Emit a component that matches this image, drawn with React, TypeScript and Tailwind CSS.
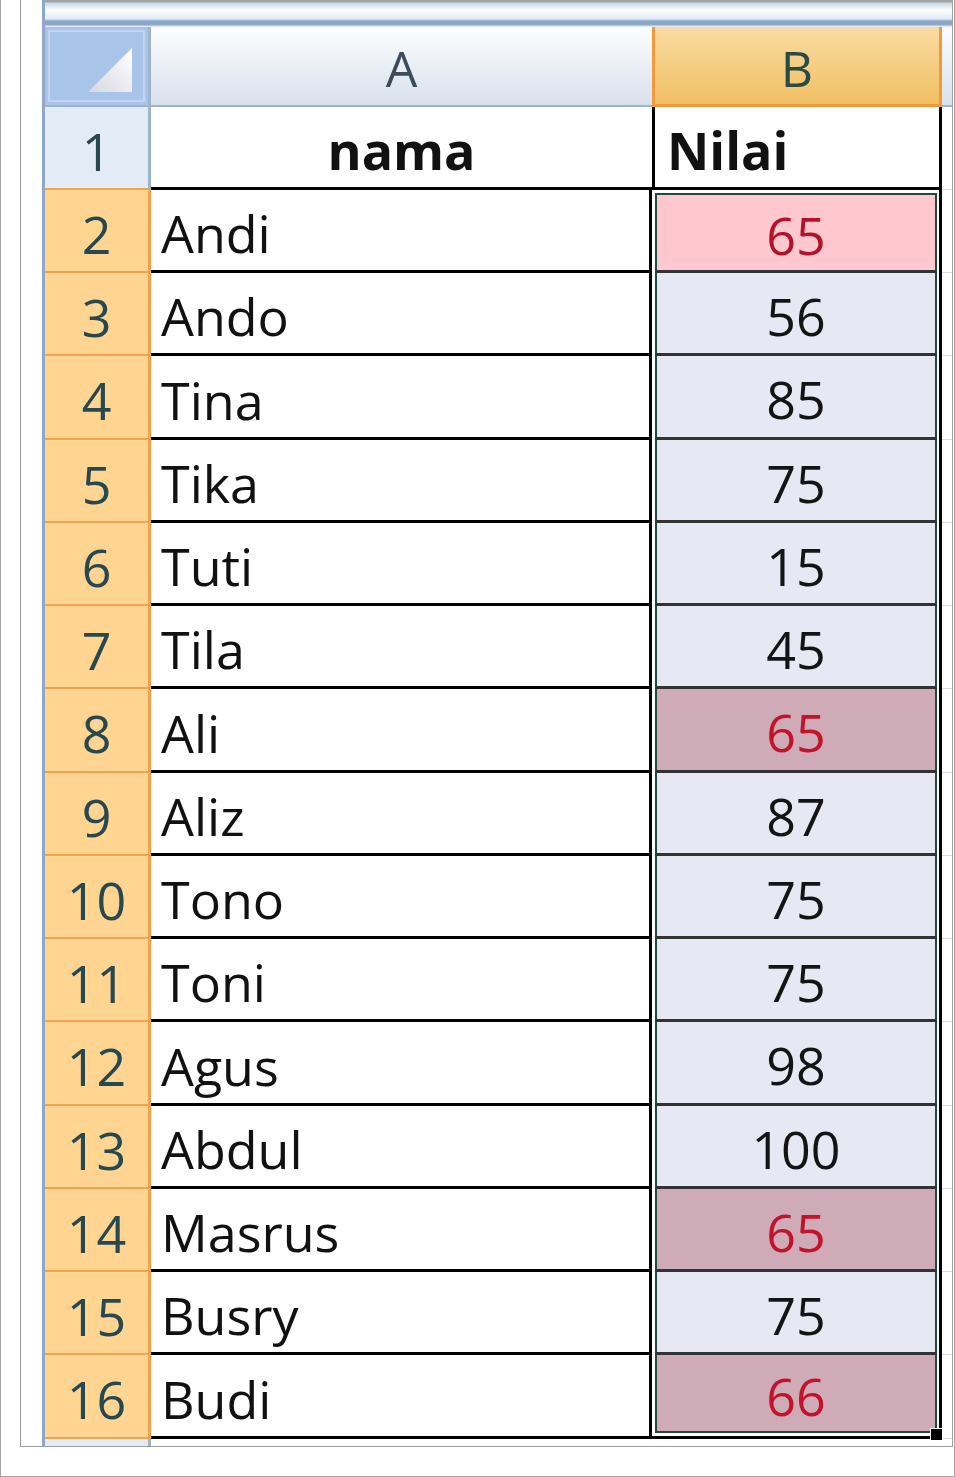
const rows = [
  { no: 2, name: "Andi", value: 65, mark: "active" },
  { no: 3, name: "Ando", value: 56 },
  { no: 4, name: "Tina", value: 85 },
  { no: 5, name: "Tika", value: 75 },
  { no: 6, name: "Tuti", value: 15 },
  { no: 7, name: "Tila", value: 45 },
  { no: 8, name: "Ali", value: 65, mark: "dup" },
  { no: 9, name: "Aliz", value: 87 },
  { no: 10, name: "Tono", value: 75 },
  { no: 11, name: "Toni", value: 75 },
  { no: 12, name: "Agus", value: 98 },
  { no: 13, name: "Abdul", value: 100 },
  { no: 14, name: "Masrus", value: 65, mark: "dup" },
  { no: 15, name: "Busry", value: 75 },
  { no: 16, name: "Budi", value: 66, mark: "dup" },
];

function CornerCell() {
  return (
    <div className="relative h-full w-[106px] border-r-[3px] border-b-[2px] border-[#9cb4cf] bg-[#a9c4e9]">
      <div className="absolute inset-[3px] border-2 border-[#c2d5ee]" />
      <svg className="absolute left-0 top-0" width="103" height="78" viewBox="0 0 103 78">
        <defs>
          <linearGradient id="tri" x1="1" y1="0" x2="0" y2="1">
            <stop offset="0" stopColor="#ffffff" />
            <stop offset="1" stopColor="#d6d9e2" />
          </linearGradient>
        </defs>
        <polygon points="43,65 87,21 87,65" fill="url(#tri)" />
      </svg>
    </div>
  );
}

function ValueCell({ value, mark, first, last }: { value: number; mark?: string; first: boolean; last: boolean }) {
  const fill =
    mark === "active"
      ? "bg-[#ffc7ce] text-[#b3122b]"
      : mark === "dup"
        ? "bg-[#ceabb6] text-[#c4122a]"
        : "bg-[#e6e9f3] text-[#141414]";

  return (
    <div
      className={`flex h-full w-[290px] border-r-[3px] border-black bg-white pl-[3px] pr-[2px] ${
        first ? "pt-[3px]" : ""
      } ${last ? "border-b-[3px] pb-[3px]" : ""}`}
    >
      <div
        className={`flex flex-1 items-center justify-center border-x-2 border-[#1f4a3e] pt-[5px] ${fill} ${
          first ? "border-t-2" : ""
        } ${last ? "border-b-2" : "border-b-[3px] border-b-[#333333]"}`}
      >
        {value}
      </div>
    </div>
  );
}

export default function App() {
  return (
    <div className="h-[1477px] w-[955px] border border-t-0 border-[#a5a5a5] bg-white font-['Open_Sans','Noto_Sans',sans-serif] text-[52px] font-medium leading-none">
      <div className="ml-[19px] mr-[1px] flex h-[1447px] border-x border-b border-[#9d9d9d] pl-[21px]">
        <div className="relative flex flex-1 flex-col border-l-[3px] border-[#8fa8c7]">
          {/* formula bar edge */}
          <div className="h-[27px] bg-[linear-gradient(to_bottom,#a3a3a3_0px,#a3a3a3_2px,#c8d8ec_3px,#fbfcfe_10px,#e3eaf4_19px,#8ba7ca_21px,#8ba7ca_25px,#dfe7f2_26px)]" />

          {/* column header */}
          <div className="flex h-[80px]">
            <CornerCell />
            <div className="flex w-[501px] items-center justify-center border-b-[2px] border-[#9cb4cf] bg-[linear-gradient(to_bottom,#fbfcfd,#d9e1ec)] pt-[4px] text-[50px] font-normal text-[#3d4c5c]">
              A
            </div>
            <div className="flex w-[290px] items-center justify-center border-x-[3px] border-b-[3px] border-[#f19a3d] bg-[linear-gradient(to_bottom,#f9dba3,#f1c062)] pt-[4px] text-[50px] font-normal text-[#2a4a44]">
              B
            </div>
            <div className="flex-1 border-b-[2px] border-[#9cb4cf] bg-[linear-gradient(to_bottom,#fbfcfd,#d9e1ec)]" />
          </div>

          {/* row 1 */}
          <div className="flex h-[83px]">
            <div className="flex w-[106px] items-center justify-center border-r-[3px] border-b-[2px] border-r-[#9cb4cf] border-b-[#f3a24b] bg-[#e3ebf6] pt-[6px] text-[#2a4650]">
              1
            </div>
            <div className="flex w-[501px] items-center justify-center border-b-[3px] border-black pt-[6px] font-bold text-[#111]">
              nama
            </div>
            <div className="flex w-[290px] items-center border-x-[3px] border-b-[3px] border-black pl-[12px] pt-[6px] font-bold text-[#111]">
              Nilai
            </div>
            <div className="flex-1 border-b border-[#d6dce6]" />
          </div>

          {rows.map((row, i) => (
            <div key={row.no} className={`flex ${i % 4 === 2 ? "h-[84px]" : "h-[83px]"}`}>
              <div className="flex w-[106px] items-center justify-center border-r-[3px] border-b-[2px] border-[#f3a24b] bg-[#ffd591] pt-[6px] text-[#284850]">
                {row.no}
              </div>
              <div className="flex w-[501px] items-center border-r-[3px] border-b-[3px] border-black pl-[10px] pt-[6px] text-[#111]">
                {row.name}
              </div>
              <ValueCell value={row.value} mark={row.mark} first={i === 0} last={i === rows.length - 1} />
              <div className="flex-1 border-b border-[#d6dce6]" />
            </div>
          ))}

          {/* row 17 edge */}
          <div className="flex flex-1">
            <div className="w-[106px] border-r-[3px] border-[#9cb4cf] bg-[#e3ebf6]" />
          </div>

          {/* fill handle */}
          <div className="absolute bottom-[5px] right-[9px] h-[13px] w-[13px] border border-white bg-black" />
        </div>
      </div>
    </div>
  );
}
